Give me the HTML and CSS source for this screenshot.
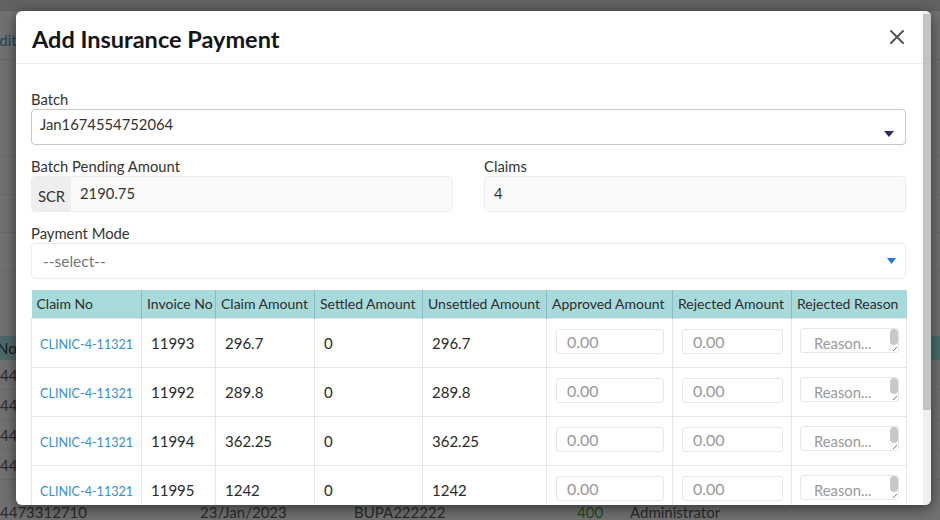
FILE: index.html
```html
<!DOCTYPE html>
<html>
<head>
<meta charset="utf-8">
<link rel="stylesheet" href="styles.css">
</head>
<body>
<div class="page">
  <div class="page-top"></div>
  <div class="page-toolbar"><a class="page-link">Edit</a></div>
  <div class="page-block"></div>
  <div class="page-line"></div>
  <div class="page-line"></div>
  <div class="page-line"></div>
  <div class="page-table">
    <div class="page-th"><span class="page-th-text">No</span></div>
    <div class="page-tr"><span>44</span></div>
    <div class="page-tr"><span>44</span></div>
    <div class="page-tr"><span>44</span></div>
    <div class="page-tr"><span>44</span></div>
    <div class="page-tr page-tr-last">
      <span>4473312710</span>
      <span>23/Jan/2023</span>
      <span>BUPA222222</span>
      <span class="page-green">400</span>
      <span>Administrator</span>
    </div>
  </div>
</div>
<div class="backdrop"></div>
<div class="modal">
  <div class="modal-main">
    <div class="modal-header">
      <h4 class="modal-title">Add Insurance Payment</h4>
      <button class="close" type="button" aria-label="Close">
        <svg width="16" height="16" viewBox="0 0 16 16"><path d="M2 2 L14 14 M14 2 L2 14" stroke="#555" stroke-width="2" stroke-linecap="round" fill="none"/></svg>
      </button>
    </div>
    <div class="modal-body">
      <div class="field">
        <label class="lbl">Batch</label>
        <div class="select select-batch">
          <span class="select-text">Jan1674554752064</span>
          <svg class="caret" width="10" height="6" viewBox="0 0 10 6"><path d="M0 0 H10 L5 6 Z" fill="#2e2a63"/></svg>
        </div>
      </div>
      <div class="row2">
        <div class="field">
          <label class="lbl">Batch Pending Amount</label>
          <div class="input-group">
            <span class="addon">SCR</span>
            <span class="ro ro-grouped">2190.75</span>
          </div>
        </div>
        <div class="field">
          <label class="lbl">Claims</label>
          <div class="ro">4</div>
        </div>
      </div>
      <div class="field">
        <label class="lbl">Payment Mode</label>
        <div class="select select-pm">
          <span class="select-placeholder">--select--</span>
          <svg class="caret" width="9" height="6" viewBox="0 0 9 6"><path d="M0 0 H9 L4.5 6 Z" fill="#1f7fd1"/></svg>
        </div>
      </div>
      <table class="claims">
        <colgroup>
          <col style="width:110px"><col style="width:74px"><col style="width:99px"><col style="width:108px">
          <col style="width:124px"><col style="width:126px"><col style="width:119px"><col style="width:115px">
        </colgroup>
        <thead>
          <tr>
            <th>Claim No</th><th>Invoice No</th><th>Claim Amount</th><th>Settled Amount</th>
            <th>Unsettled Amount</th><th>Approved Amount</th><th>Rejected Amount</th><th>Rejected Reason</th>
          </tr>
        </thead>
        <tbody>
          <tr>
            <td><a class="link">CLINIC-4-11321</a></td><td>11993</td><td>296.7</td><td>0</td><td>296.7</td>
            <td><div class="amt amt-approved">0.00</div></td>
            <td><div class="amt amt-rejected">0.00</div></td>
            <td><div class="reason"><span class="reason-text">Reason...</span><span class="reason-sb"><span class="reason-thumb"></span><span class="grip"></span></span></div></td>
          </tr>
          <tr>
            <td><a class="link">CLINIC-4-11321</a></td><td>11992</td><td>289.8</td><td>0</td><td>289.8</td>
            <td><div class="amt amt-approved">0.00</div></td>
            <td><div class="amt amt-rejected">0.00</div></td>
            <td><div class="reason"><span class="reason-text">Reason...</span><span class="reason-sb"><span class="reason-thumb"></span><span class="grip"></span></span></div></td>
          </tr>
          <tr>
            <td><a class="link">CLINIC-4-11321</a></td><td>11994</td><td>362.25</td><td>0</td><td>362.25</td>
            <td><div class="amt amt-approved">0.00</div></td>
            <td><div class="amt amt-rejected">0.00</div></td>
            <td><div class="reason"><span class="reason-text">Reason...</span><span class="reason-sb"><span class="reason-thumb"></span><span class="grip"></span></span></div></td>
          </tr>
          <tr>
            <td><a class="link">CLINIC-4-11321</a></td><td>11995</td><td>1242</td><td>0</td><td>1242</td>
            <td><div class="amt amt-approved">0.00</div></td>
            <td><div class="amt amt-rejected">0.00</div></td>
            <td><div class="reason"><span class="reason-text">Reason...</span><span class="reason-sb"><span class="reason-thumb"></span><span class="grip"></span></span></div></td>
          </tr>
        </tbody>
      </table>
    </div>
  </div>
  <div class="scrollbar"><div class="scroll-thumb"></div></div>
</div>
</body>
</html>
```
FILE: styles.css
```css
* { box-sizing: border-box; }
html, body { margin: 0; padding: 0; }
body {
  width: 940px;
  height: 520px;
  overflow: hidden;
  position: relative;
  font-family: Lato, "Noto Sans", "Liberation Sans", sans-serif;
  color: #333;
  background: #e2e2e2;
}

/* background page */
.page { width: 940px; height: 520px; background: #e2e2e2; overflow: hidden; }
.page-top { height: 11px; background: #c4c4c4; }
.page-toolbar {
  height: 49px;
  border-bottom: 1px solid #cfcfcf;
  display: flex;
  align-items: center;
  padding-top: 10px;
}
.page-link { color: #3c8dbc; font-size: 15px; margin-left: -9px; }
.page-block { height: 97px; border-bottom: 1px solid #d2d2d2; }
.page-line { height: 38px; border-bottom: 1px solid #d2d2d2; }
.page-table { margin-top: 65px; }
.page-th {
  height: 24px;
  background: #9bd3d6;
  display: flex;
  align-items: center;
  font-size: 15px;
}
.page-th-text { margin-left: -3px; }
.page-tr {
  height: 30px;
  border-bottom: 1px solid #d2d2d2;
  display: flex;
  align-items: center;
  font-size: 15px;
  color: #555;
}
.page-tr-last {
  border-bottom: none;
  margin-top: 17px;
  display: grid;
  grid-template-columns: 200px 154px 223px 53px 1fr;
  align-items: center;
}
.page-green { color: #3a9a3a; }

.backdrop {
  position: absolute;
  inset: 0;
  background: rgba(0, 0, 0, 0.5);
}

/* modal */
.modal {
  position: absolute;
  left: 16px;
  top: 11px;
  width: 915px;
  height: 494px;
  background: #fff;
  border-radius: 6px;
  box-shadow: 0 3px 14px rgba(0, 0, 0, 0.55);
  display: flex;
  overflow: hidden;
}
.modal-main { flex: 1; min-width: 0; }
.scrollbar { width: 8px; background: #f0f0f0; padding-top: 3px; }
.scroll-thumb { height: 396px; background: #c3c3c3; border-radius: 1px; }

.modal-header {
  height: 53px;
  border-bottom: 1px solid #eeeeee;
  display: flex;
  align-items: center;
  justify-content: space-between;
  padding: 4px 18px 0 16px;
}
.modal-title {
  margin: 0;
  font-size: 23.5px;
  font-weight: 700;
  color: #151515;
}
.close {
  border: none;
  background: none;
  padding: 0;
  width: 16px;
  height: 16px;
  display: flex;
  margin-top: -4px;
}

.modal-body { padding: 25px 17px 0 15px; }
.field { display: flex; flex-direction: column; }
.lbl { font-size: 14.8px; line-height: 20px; color: #333; }

.select {
  position: relative;
  border-radius: 4px;
  display: flex;
  justify-content: space-between;
  font-size: 14.8px;
}
.select-batch {
  height: 36px;
  border: 1px solid #c8c8c8;
  padding: 4px 11px 0 8px;
  margin-bottom: 11px;
}
.select-text { color: #333; line-height: 20px; }
.select-batch .caret { margin-top: 17px; }
.select-pm {
  height: 36px;
  border: 1px solid #ececec;
  padding: 0 9px 0 11px;
  align-items: center;
  margin-bottom: 11px;
}
.select-placeholder { color: #777; font-size: 15.5px; }

.row2 {
  display: grid;
  grid-template-columns: 422px 422px;
  column-gap: 31px;
  margin-bottom: 11px;
}
.input-group {
  display: flex;
  height: 36px;
  border: 1px solid #ededed;
  border-radius: 4px;
  overflow: hidden;
  background: #fafafa;
}
.addon {
  width: 39px;
  background: #eeeeee;
  font-size: 14.8px;
  display: flex;
  align-items: center;
  justify-content: center;
  padding-top: 4px;
  color: #333;
}
.ro {
  height: 36px;
  border: 1px solid #ededed;
  border-radius: 4px;
  background: #fafafa;
  font-size: 14.8px;
  padding: 7px 9px 0;
  color: #333;
}
.ro-grouped { border: none; border-radius: 0; height: auto; flex: 1; }

.claims {
  border-collapse: collapse;
  table-layout: fixed;
  width: 875px;
}
.claims th {
  height: 28px;
  background: #a8dadc;
  border: 1px solid #88bcc6;
  border-top: none;
  border-bottom: none;
  font-size: 14px;
  font-weight: 400;
  text-align: left;
  padding: 0 5px;
  white-space: nowrap;
  overflow: hidden;
  color: #2d2d2d;
}
.claims th:first-child { border-left: none; }
.claims th:last-child { border-right: none; }
.claims td {
  height: 49px;
  border: 1px solid #e6e6e6;
  padding: 0 9px;
  font-size: 15px;
  color: #2a2a2a;
  vertical-align: middle;
  white-space: nowrap;
}
.claims td:first-child { padding-left: 8px; }
.link { color: #3a8fd0; font-size: 12.6px; white-space: nowrap; }

.amt {
  height: 25px;
  border: 1px solid #e6e6e6;
  border-radius: 3px;
  padding-left: 10px;
  font-size: 16px;
  line-height: 23px;
  color: #999;
  margin-top: -2px;
}
.amt-approved { width: 108px; }
.amt-rejected { width: 101px; }
.claims td:last-child { padding: 0 8px; }
.reason {
  width: 99px;
  height: 25px;
  border: 1px solid #e6e6e6;
  border-radius: 3px;
  display: flex;
  justify-content: space-between;
  margin-top: -4px;
}
.reason-text {
  font-size: 14.8px;
  color: #999;
  padding: 5px 0 0 13px;
  white-space: nowrap;
}
.reason-sb {
  width: 8px;
  display: flex;
  flex-direction: column;
  justify-content: space-between;
  align-items: center;
}
.reason-thumb {
  width: 8px;
  height: 16px;
  background: #c8c8c8;
  border-radius: 4px;
}
.grip {
  width: 4px;
  height: 4px;
  margin: 0 0 1px 2px;
  background: linear-gradient(135deg, transparent 45%, #777 46%, #777 60%, transparent 61%);
}
```
